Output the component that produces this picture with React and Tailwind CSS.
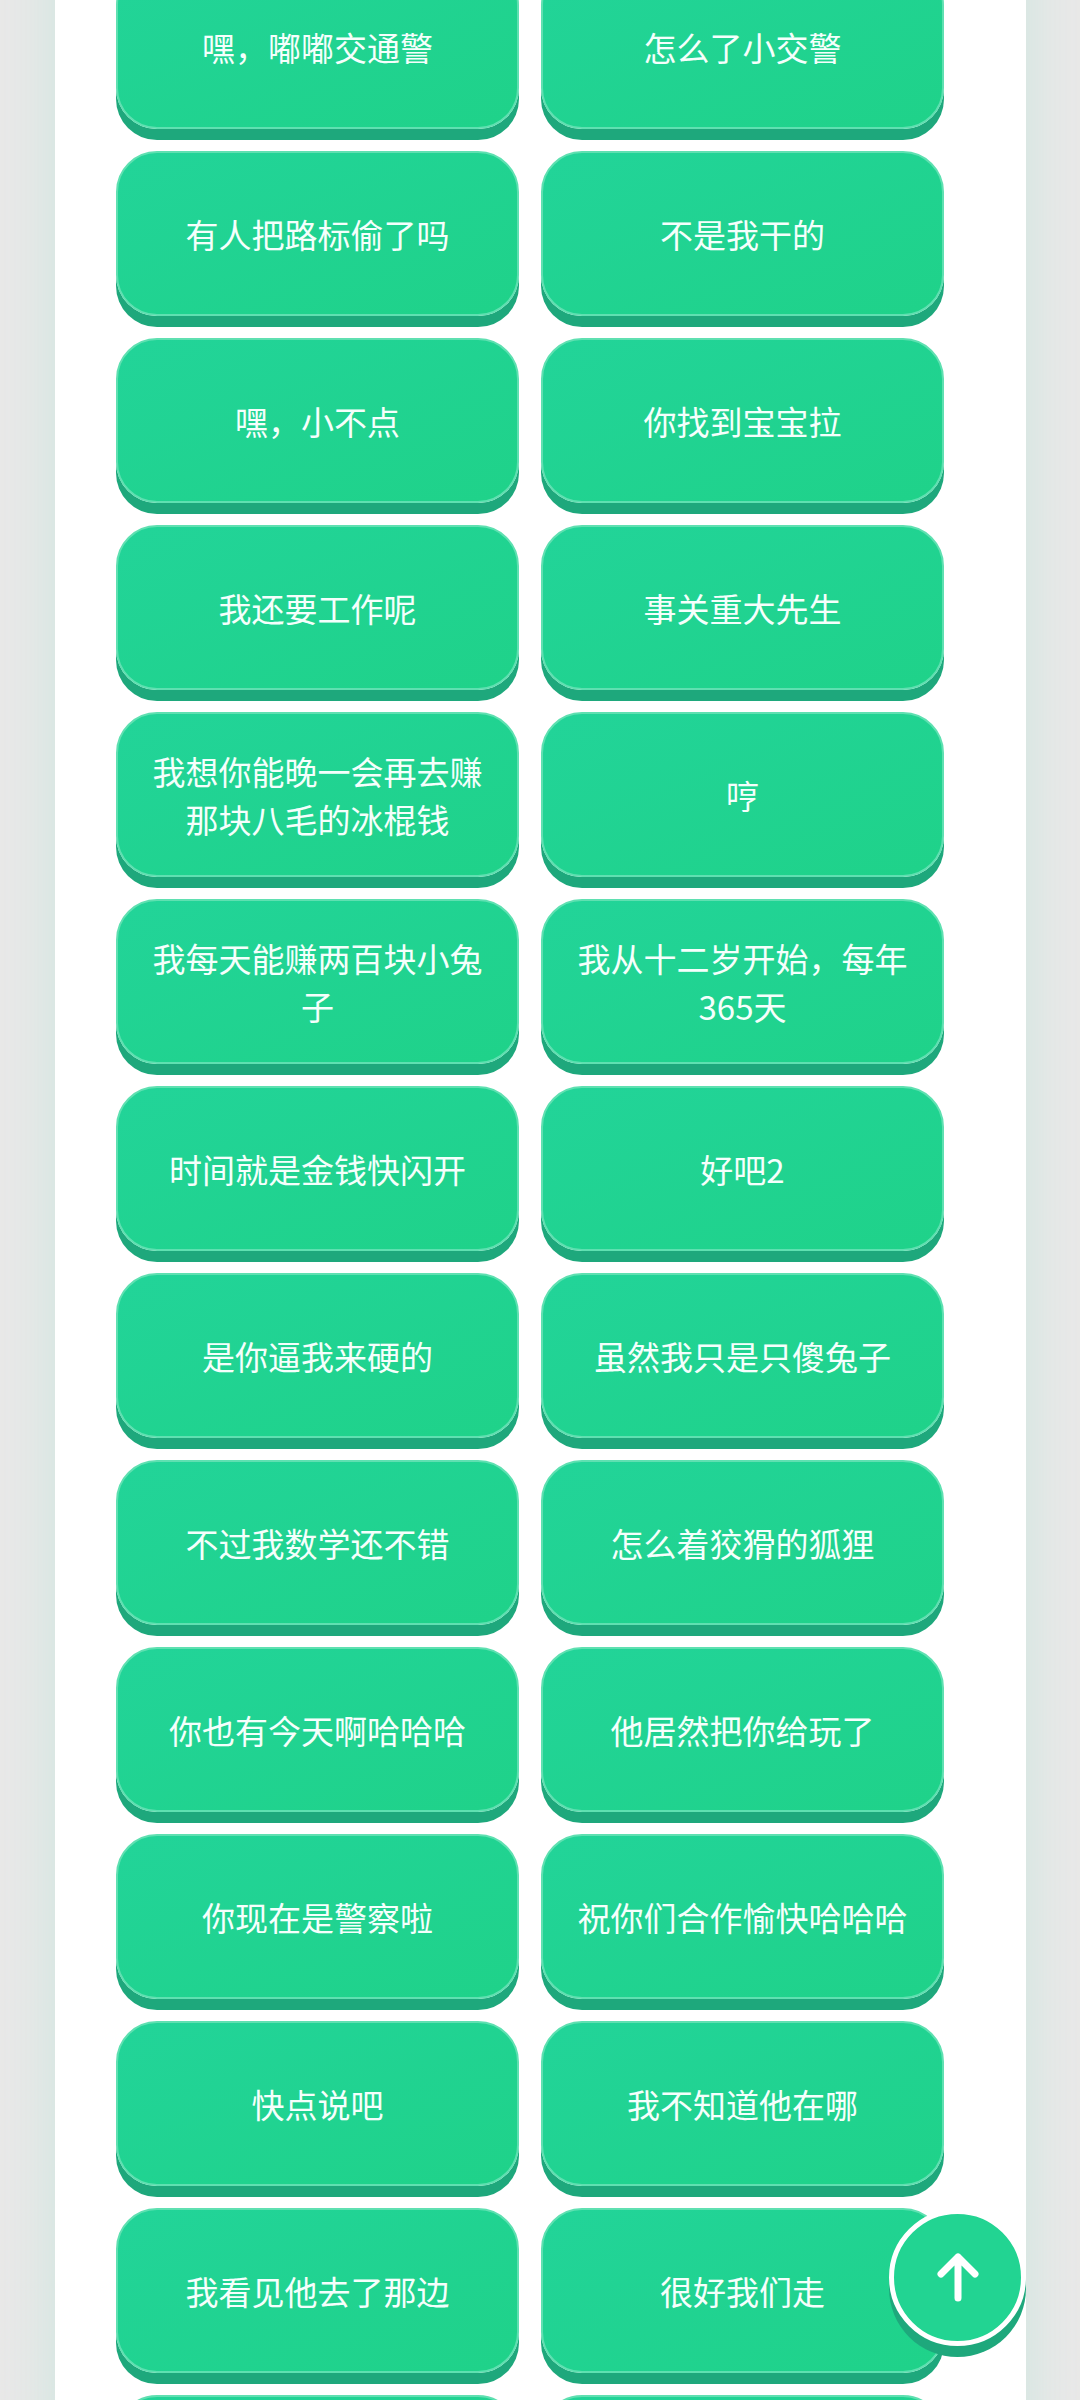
import React from "react";

const SOUNDS = [
  ["嘿，嘟嘟交通警", "怎么了小交警"],
  ["有人把路标偷了吗", "不是我干的"],
  ["嘿，小不点", "你找到宝宝拉"],
  ["我还要工作呢", "事关重大先生"],
  ["我想你能晚一会再去赚那块八毛的冰棍钱", "哼"],
  ["我每天能赚两百块小兔子", "我从十二岁开始，每年365天"],
  ["时间就是金钱快闪开", "好吧2"],
  ["是你逼我来硬的", "虽然我只是只傻兔子"],
  ["不过我数学还不错", "怎么着狡猾的狐狸"],
  ["你也有今天啊哈哈哈", "他居然把你给玩了"],
  ["你现在是警察啦", "祝你们合作愉快哈哈哈"],
  ["快点说吧", "我不知道他在哪"],
  ["我看见他去了那边", "很好我们走"],
  ["", ""],
].flat();

const SoundButton = ({ label, index }) => (
  <button
    type="button"
    aria-label={label ? undefined : `${index + 1}`}
    className="flex h-[165px] items-center justify-center rounded-[41px] border-2 border-[#5fe0b1] bg-linear-to-br from-[#22d499] to-[#1fd289] bg-origin-border px-8 text-center text-[33px] leading-[48px] text-[#f5fffc] shadow-[0_11px_0_#1ea87c]"
  >
    {label}
  </button>
);

const ScrollTopButton = () => (
  <button
    type="button"
    aria-label="Top"
    className="fixed right-[54px] bottom-[54px] flex size-[137px] items-center justify-center rounded-full border-5 border-white bg-[#22d492] text-white shadow-[0_11px_0_#1ea87c]"
  >
    <svg
      viewBox="0 0 42 49"
      className="h-[49px] w-[42px] overflow-visible"
      fill="none"
      stroke="currentColor"
      strokeWidth="7"
      strokeLinecap="round"
      strokeLinejoin="round"
    >
      <path d="M21 45V4M4 21L21 4l17 17" />
    </svg>
  </button>
);

const App = () => {
  return (
    <div className="h-screen overflow-hidden bg-[#e9e8e8] pr-[54px] pl-[55px] font-['Noto_Sans_CJK_SC',sans-serif]">
      {/* panel starts above the window, the list is scrolled part of a row down */}
      <main className="-mt-24 bg-white pt-[60px] pr-[82px] pl-[61px] shadow-[0_0_55px_#cce6df]">
        <div className="grid grid-cols-2 gap-[22px]">
          {SOUNDS.map((label, index) => (
            <SoundButton key={index} label={label} index={index} />
          ))}
        </div>
      </main>
      <ScrollTopButton />
    </div>
  );
};

export default App;
